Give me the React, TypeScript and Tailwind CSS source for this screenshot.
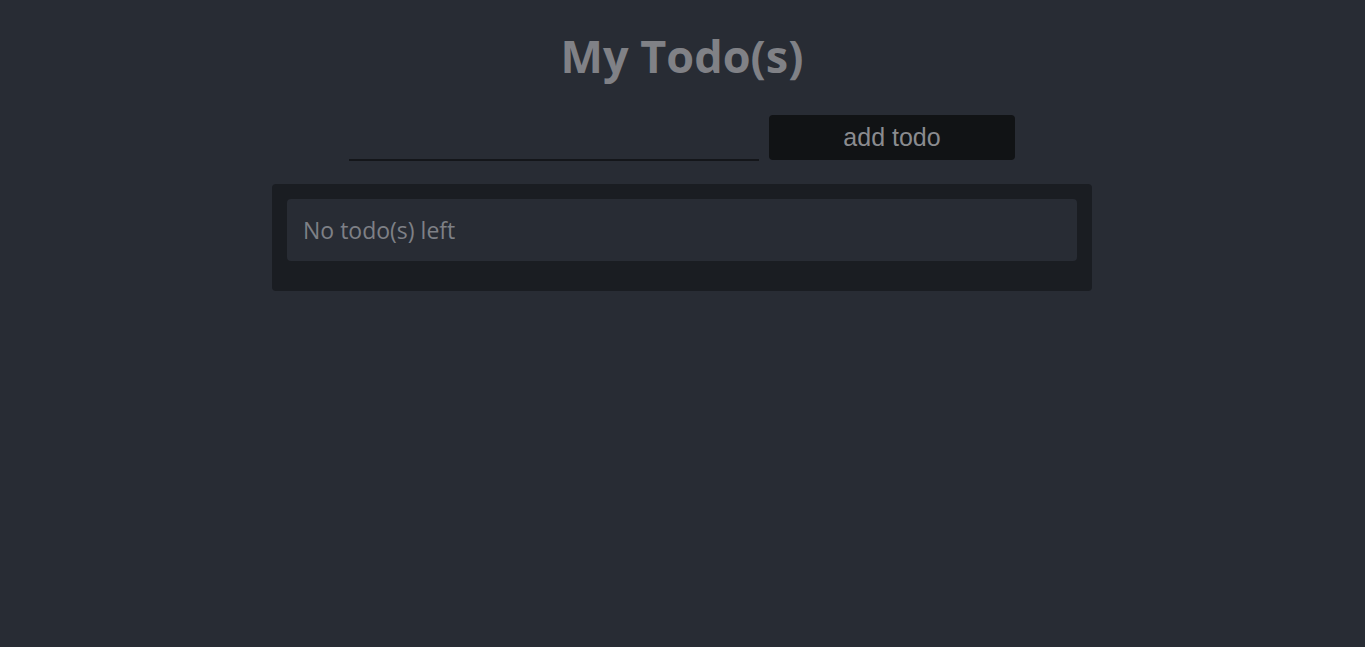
export default function App() {
  return (
    <div className="min-h-[647px] w-full bg-[#282c34]" style={{ fontFamily: '"Open Sans", "Noto Sans", sans-serif' }}>
      <div className="w-[1364px] flex flex-col items-center">
        <h1 className="mt-[25px] text-[45px] leading-[62px] font-bold text-[#808186]">My Todo(s)</h1>
        <div className="mt-[28px] flex items-end gap-[10px]">
          <input
            type="text"
            className="w-[410px] h-[31px] mb-[-1px] bg-transparent border-0 border-b-2 border-[#14161a] outline-none text-[#808186] text-[20px]"
          />
          <button
            className="w-[246px] h-[45px] rounded-[4px] bg-[#111315] text-[#8a8b8f] text-[25px] leading-none"
            style={{ fontFamily: '"Liberation Sans", Arial, sans-serif' }}
          >
            add todo
          </button>
        </div>
        <div className="mt-[24px] w-[820px] rounded-[4px] bg-[#1a1d22] pt-[15px] px-[15px] pb-[30px]">
          <div className="h-[62px] rounded-[4px] bg-[#282c34] flex items-center px-[16px] text-[23px] text-[#7e8086]">
            No todo(s) left
          </div>
        </div>
      </div>
    </div>
  );
}
